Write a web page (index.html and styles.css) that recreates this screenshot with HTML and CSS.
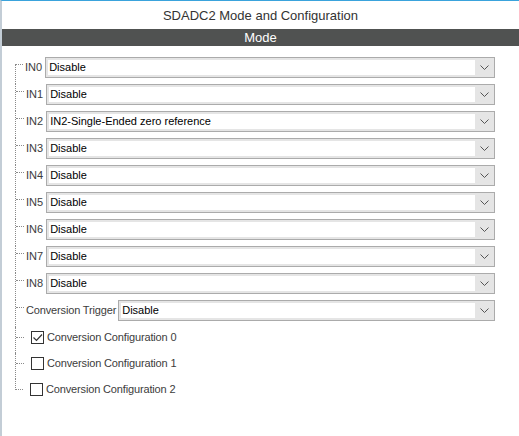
FILE: index.html
```html
<!DOCTYPE html>
<html>
<head>
<meta charset="utf-8">
<link rel="stylesheet" href="styles.css">
</head>
<body>
<div class="frame">
  <div class="title">SDADC2 Mode and Configuration</div>
  <div class="bar">Mode</div>
  <div class="tree">
    <div class="row first"><span class="branch"></span><span class="label">IN0</span><div class="select"><span class="field">Disable</span><span class="btn"><svg width="9" height="5" viewBox="0 0 9 5"><path d="M0.5 0.5 L4.5 4.5 L8.5 0.5" fill="none" stroke="#555" stroke-width="1"/></svg></span></div></div>
    <div class="row"><span class="branch"></span><span class="label">IN1</span><div class="select"><span class="field">Disable</span><span class="btn"><svg width="9" height="5" viewBox="0 0 9 5"><path d="M0.5 0.5 L4.5 4.5 L8.5 0.5" fill="none" stroke="#555" stroke-width="1"/></svg></span></div></div>
    <div class="row"><span class="branch"></span><span class="label">IN2</span><div class="select"><span class="field">IN2-Single-Ended zero reference</span><span class="btn"><svg width="9" height="5" viewBox="0 0 9 5"><path d="M0.5 0.5 L4.5 4.5 L8.5 0.5" fill="none" stroke="#555" stroke-width="1"/></svg></span></div></div>
    <div class="row"><span class="branch"></span><span class="label">IN3</span><div class="select"><span class="field">Disable</span><span class="btn"><svg width="9" height="5" viewBox="0 0 9 5"><path d="M0.5 0.5 L4.5 4.5 L8.5 0.5" fill="none" stroke="#555" stroke-width="1"/></svg></span></div></div>
    <div class="row"><span class="branch"></span><span class="label">IN4</span><div class="select"><span class="field">Disable</span><span class="btn"><svg width="9" height="5" viewBox="0 0 9 5"><path d="M0.5 0.5 L4.5 4.5 L8.5 0.5" fill="none" stroke="#555" stroke-width="1"/></svg></span></div></div>
    <div class="row"><span class="branch"></span><span class="label">IN5</span><div class="select"><span class="field">Disable</span><span class="btn"><svg width="9" height="5" viewBox="0 0 9 5"><path d="M0.5 0.5 L4.5 4.5 L8.5 0.5" fill="none" stroke="#555" stroke-width="1"/></svg></span></div></div>
    <div class="row"><span class="branch"></span><span class="label">IN6</span><div class="select"><span class="field">Disable</span><span class="btn"><svg width="9" height="5" viewBox="0 0 9 5"><path d="M0.5 0.5 L4.5 4.5 L8.5 0.5" fill="none" stroke="#555" stroke-width="1"/></svg></span></div></div>
    <div class="row"><span class="branch"></span><span class="label">IN7</span><div class="select"><span class="field">Disable</span><span class="btn"><svg width="9" height="5" viewBox="0 0 9 5"><path d="M0.5 0.5 L4.5 4.5 L8.5 0.5" fill="none" stroke="#555" stroke-width="1"/></svg></span></div></div>
    <div class="row"><span class="branch"></span><span class="label">IN8</span><div class="select"><span class="field">Disable</span><span class="btn"><svg width="9" height="5" viewBox="0 0 9 5"><path d="M0.5 0.5 L4.5 4.5 L8.5 0.5" fill="none" stroke="#555" stroke-width="1"/></svg></span></div></div>
    <div class="row"><span class="branch"></span><span class="label trig">Conversion Trigger</span><div class="select"><span class="field">Disable</span><span class="btn"><svg width="9" height="5" viewBox="0 0 9 5"><path d="M0.5 0.5 L4.5 4.5 L8.5 0.5" fill="none" stroke="#555" stroke-width="1"/></svg></span></div></div>
    <div class="row check"><span class="branch"></span><span class="box"><svg width="11" height="11" viewBox="0 0 11 11"><path d="M1.5 5.5 L4.5 8.5 L10 2.5" fill="none" stroke="#333" stroke-width="1.2"/></svg></span><span class="clabel">Conversion Configuration 0</span></div>
    <div class="row check"><span class="branch"></span><span class="box"></span><span class="clabel">Conversion Configuration 1</span></div>
    <div class="row check last"><span class="branch"></span><span class="box"></span><span class="clabel">Conversion Configuration 2</span></div>
  </div>
</div>
</body>
</html>
```

FILE: styles.css
```css
html, body {
  margin: 0;
  padding: 0;
  background: #ffffff;
}
body {
  width: 519px;
  height: 436px;
  overflow: hidden;
  font-family: "Liberation Sans", Arial, sans-serif;
}
.frame {
  height: 436px;
  border-left: 2px solid #c3cdd6;
  border-top: 1px solid #3aa3dc;
  box-sizing: border-box;
}
.title {
  height: 28px;
  line-height: 29px;
  text-align: center;
  font-size: 13px;
  color: #333333;
}
.bar {
  height: 17px;
  line-height: 17px;
  background: #505251;
  color: #ffffff;
  text-align: center;
  font-size: 13px;
}
.tree {
  padding: 11px 0 0 0;
  display: flex;
  flex-direction: column;
}
.row {
  display: flex;
  align-items: flex-start;
  height: 27px;
  margin-left: 13px;
  margin-right: 24px;
}
.branch {
  align-self: stretch;
  width: 8px;
  flex: none;
  border-left: 1px dotted #8a8a8a;
  position: relative;
}
.branch::after {
  content: "";
  position: absolute;
  left: 0;
  top: 7px;
  width: 8px;
  border-top: 1px dotted #8a8a8a;
}
.first .branch {
  border-left: none;
}
.first .branch::before {
  content: "";
  position: absolute;
  left: 0;
  top: 7px;
  bottom: 0;
  border-left: 1px dotted #8a8a8a;
}
.last .branch {
  border-left: none;
}
.last .branch::before {
  content: "";
  position: absolute;
  left: 0;
  top: 0;
  height: 11px;
  border-left: 1px dotted #8a8a8a;
}
.label {
  font-size: 11px;
  color: #3c3c3c;
  padding: 0 3px 0 2px;
  line-height: 21px;
  white-space: nowrap;
}
.trig {
  letter-spacing: -0.15px;
  padding-right: 2px;
}
.select {
  flex: 1;
  display: flex;
  height: 21px;
  box-sizing: border-box;
  border: 1px solid #ababab;
  background: #e5e5e5;
  padding: 2px 0 2px 2px;
}
.field {
  flex: 1;
  background: #ffffff;
  font-size: 11px;
  color: #000000;
  line-height: 15px;
  padding-left: 1px;
  white-space: nowrap;
}
.btn {
  width: 19px;
  flex: none;
  display: flex;
  align-items: center;
  justify-content: center;
}
.check {
  height: 26px;
  align-items: flex-start;
  padding-top: 4px;
  box-sizing: border-box;
}
.check .branch {
  margin-top: -4px;
}
.check .branch::after {
  top: 10px;
}
.box {
  width: 13px;
  height: 13px;
  box-sizing: border-box;
  border: 1px solid #333333;
  background: #ffffff;
  margin: 0 3px 0 7px;
  display: flex;
  align-items: center;
  justify-content: center;
}
.clabel {
  font-size: 11px;
  color: #3c3c3c;
  line-height: 13px;
  letter-spacing: -0.15px;
  white-space: nowrap;
}
```
